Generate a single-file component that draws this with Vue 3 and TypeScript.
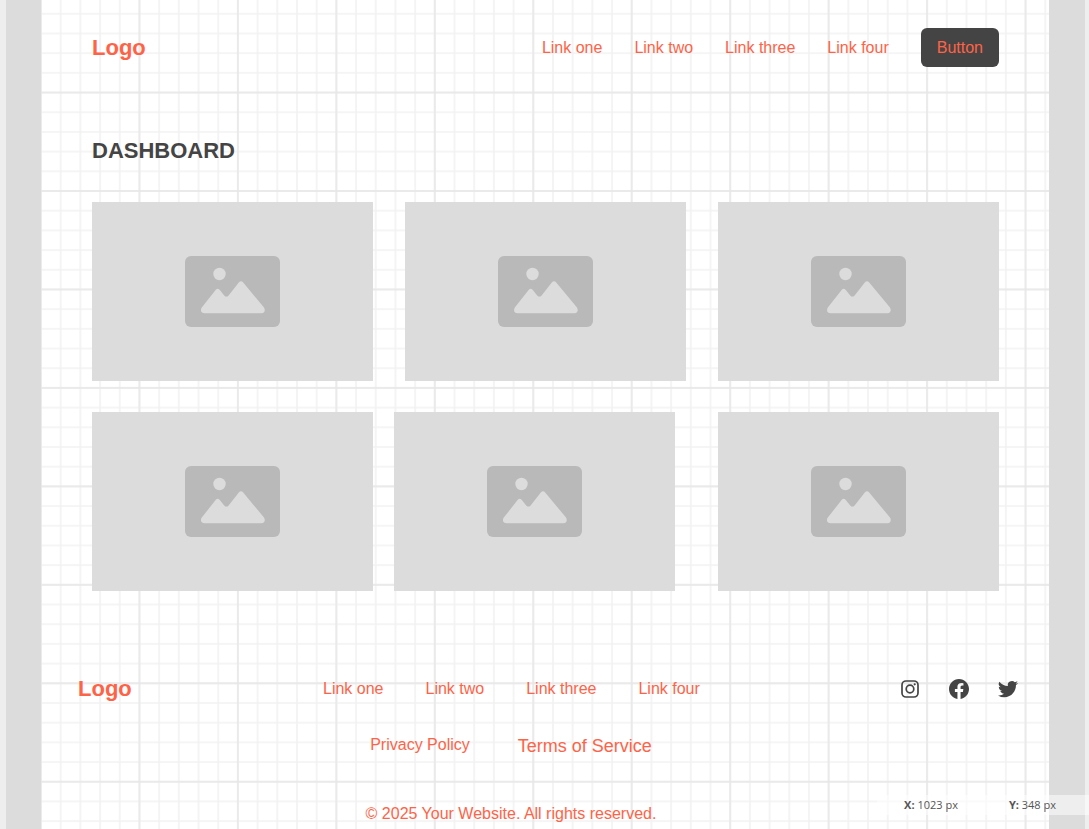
<script setup lang="ts">
import { ref } from 'vue'

const links: string[] = ['Link one', 'Link two', 'Link three', 'Link four']
const topRow: number[] = [1, 2, 3]
const bottomLeft: number[] = [4, 5]
const cursor = ref({ x: 1023, y: 348 })
</script>

<template>
  <div class="workspace">
    <div class="rail"></div>
    <div class="canvas">
      <svg class="grid" viewBox="0 0 1024 842" preserveAspectRatio="xMinYMin slice" aria-hidden="true">
        <defs>
          <pattern id="minor" width="20" height="20" y="-6" patternUnits="userSpaceOnUse">
            <path d="M0 0H20M0 20H20M0 0V20M20 0V20" fill="none" stroke="#f2f2f2" stroke-width="1.6" />
          </pattern>
          <pattern id="major" width="100" height="100" y="-6" patternUnits="userSpaceOnUse">
            <path d="M0 0H100M0 100H100M0 0V100M100 0V100" fill="none" stroke="#e6e6e6" stroke-width="1.4" />
          </pattern>
          <symbol id="picture" viewBox="0 0 95 71">
            <rect width="95" height="71" rx="6" fill="#b9b9b9" />
            <circle cx="34.5" cy="18" r="6.2" fill="#dcdcdc" />
            <path
              d="M17 51.3L30.6 34Q32.7 31.4 34.8 34L39.2 39.4Q41.4 41.8 43.6 39.4L53.8 26.4Q56 24 58.2 26.4L79 51.6Q80.4 54 79.2 55.9Q78.3 57.3 76 57.3H19.5Q17 57.3 16.2 55.5Q15.4 53.3 17 51.3Z"
              fill="#dcdcdc"
            />
          </symbol>
        </defs>
        <rect width="1024" height="5000" fill="url(#minor)" />
        <rect width="1024" height="5000" fill="url(#major)" />
      </svg>

      <header class="header">
        <a class="logo" href="#">Logo</a>
        <nav class="nav" aria-label="Main">
          <a v-for="link in links" :key="link" href="#">{{ link }}</a>
          <button type="button" class="button">Button</button>
        </nav>
      </header>

      <main class="main">
        <h1>DASHBOARD</h1>
        <div class="row">
          <div v-for="n in topRow" :key="n" class="card">
            <svg class="picture" role="img" aria-label="Image"><use href="#picture" /></svg>
          </div>
        </div>
        <div class="row lower">
          <div class="pair">
            <div v-for="n in bottomLeft" :key="n" class="card">
              <svg class="picture" role="img" aria-label="Image"><use href="#picture" /></svg>
            </div>
          </div>
          <div class="card">
            <svg class="picture" role="img" aria-label="Image"><use href="#picture" /></svg>
          </div>
        </div>
      </main>

      <footer class="footer">
        <div class="footer-top">
          <a class="logo" href="#">Logo</a>
          <nav class="footer-nav" aria-label="Footer">
            <a v-for="link in links" :key="link" href="#">{{ link }}</a>
          </nav>
          <div class="social">
            <a href="#" aria-label="Instagram">
              <svg viewBox="0 0 24 24" fill="none" stroke="#444444">
                <rect x="4" y="4" width="16" height="16" rx="4" stroke-width="1.7" />
                <circle cx="12" cy="12" r="3.8" stroke-width="1.7" />
                <circle cx="16.7" cy="7.3" r="1.1" fill="#444444" stroke="none" />
              </svg>
            </a>
            <a href="#" aria-label="Facebook">
              <svg viewBox="0 0 24 24" fill="#444444">
                <path d="M22 12.06C22 6.5 17.52 2 12 2S2 6.5 2 12.06c0 5 3.66 9.16 8.44 9.94v-7.03H7.9v-2.91h2.54V9.85c0-2.52 1.49-3.91 3.78-3.91 1.09 0 2.24.2 2.24.2v2.47h-1.26c-1.24 0-1.63.78-1.63 1.57v1.88h2.78l-.45 2.91h-2.33V22C18.34 21.22 22 17.06 22 12.06Z" />
              </svg>
            </a>
            <a href="#" aria-label="Twitter">
              <svg viewBox="0 0 24 24" fill="#444444">
                <path d="M22 5.9c-.74.33-1.53.55-2.36.65.85-.51 1.5-1.31 1.8-2.27-.79.47-1.67.81-2.6 1A4.1 4.1 0 0 0 11.86 9C8.45 8.84 5.43 7.2 3.4 4.72a4.1 4.1 0 0 0 1.27 5.48c-.67-.02-1.3-.2-1.86-.51v.05a4.1 4.1 0 0 0 3.29 4.02c-.6.16-1.24.19-1.85.07a4.1 4.1 0 0 0 3.83 2.85A8.23 8.23 0 0 1 2 18.38a11.6 11.6 0 0 0 6.29 1.84c7.55 0 11.67-6.25 11.67-11.67l-.01-.53A8.35 8.35 0 0 0 22 5.9Z" />
              </svg>
            </a>
          </div>
        </div>
        <div class="legal">
          <a href="#">Privacy Policy</a>
          <a class="terms" href="#">Terms of Service</a>
        </div>
        <p class="copyright">© 2025 Your Website. All rights reserved.</p>
      </footer>
    </div>
    <div class="rail"></div>

    <div class="status">
      <span><b>X:</b> {{ cursor.x }} px</span>
      <span><b>Y:</b> {{ cursor.y }} px</span>
    </div>
  </div>
</template>

<style>
body {
  margin: 0;
  background: #eeeeee;
}
</style>

<style scoped>
.workspace {
  position: relative;
  box-sizing: border-box;
  display: flex;
  min-height: 100vh;
  padding: 0 4px 0 6px;
  font-family: "Liberation Sans", Arial, sans-serif;
  font-size: 16px;
  color: #ff6347;
}
.rail {
  flex: 0 0 36px;
  background: #dcdcdc;
}
.rail:first-child {
  flex-basis: 35px;
}
.canvas {
  position: relative;
  flex: 1;
  min-width: 0;
  background: #ffffff;
}
.grid {
  position: absolute;
  inset: 0;
  width: 100%;
  height: 100%;
}
.header,
.main,
.footer {
  position: relative;
}
a {
  color: inherit;
  text-decoration: none;
}
.logo {
  font-size: 22px;
  font-weight: 700;
}
.header {
  display: flex;
  align-items: center;
  justify-content: space-between;
  padding: 28px 50px 0 51px;
}
.nav {
  display: flex;
  align-items: center;
  gap: 32px;
}
.button {
  height: 39px;
  padding: 0 16px;
  border: 0;
  border-radius: 6px;
  background: #444444;
  color: inherit;
  font: inherit;
}
.main {
  padding: 71px 50px 0 51px;
}
h1 {
  margin: 0 0 38px;
  font-size: 22px;
  line-height: 26px;
  color: #444444;
}
.row {
  display: flex;
  justify-content: space-between;
}
.row > .card {
  width: calc((100% - 64px) / 3);
}
.lower {
  margin-top: 31px;
}
.pair {
  display: flex;
  gap: 21px;
  width: calc((100% - 64px) / 3 * 2 + 21px);
}
.pair > .card {
  flex: 1;
}
.card {
  display: flex;
  align-items: center;
  justify-content: center;
  aspect-ratio: 11 / 7;
  background: #dcdcdc;
}
.picture {
  width: 95px;
  height: 71px;
}
.footer {
  padding: 85px 29px 0 37px;
}
.footer-top {
  display: grid;
  grid-template-columns: 245px 1fr auto;
  align-items: center;
}
.footer-nav {
  display: flex;
  gap: 42px;
}
.social {
  display: flex;
  gap: 25px;
}
.social svg {
  display: block;
  width: 24px;
  height: 24px;
}
.legal {
  display: flex;
  align-items: flex-start;
  justify-content: center;
  gap: 48px;
  margin: 34px 76px 0 0;
}
.terms {
  font-size: 18px;
}
.copyright {
  margin: 48px 76px 0 0;
  text-align: center;
}
.status {
  position: absolute;
  right: 0;
  bottom: 14px;
  display: flex;
  gap: 51px;
  padding: 0 33px 0 27px;
  background: rgba(255, 255, 255, 0.5);
  color: #555555;
  font-family: "Open Sans", "Noto Sans", sans-serif;
  font-size: 11px;
  line-height: 20px;
}
</style>
